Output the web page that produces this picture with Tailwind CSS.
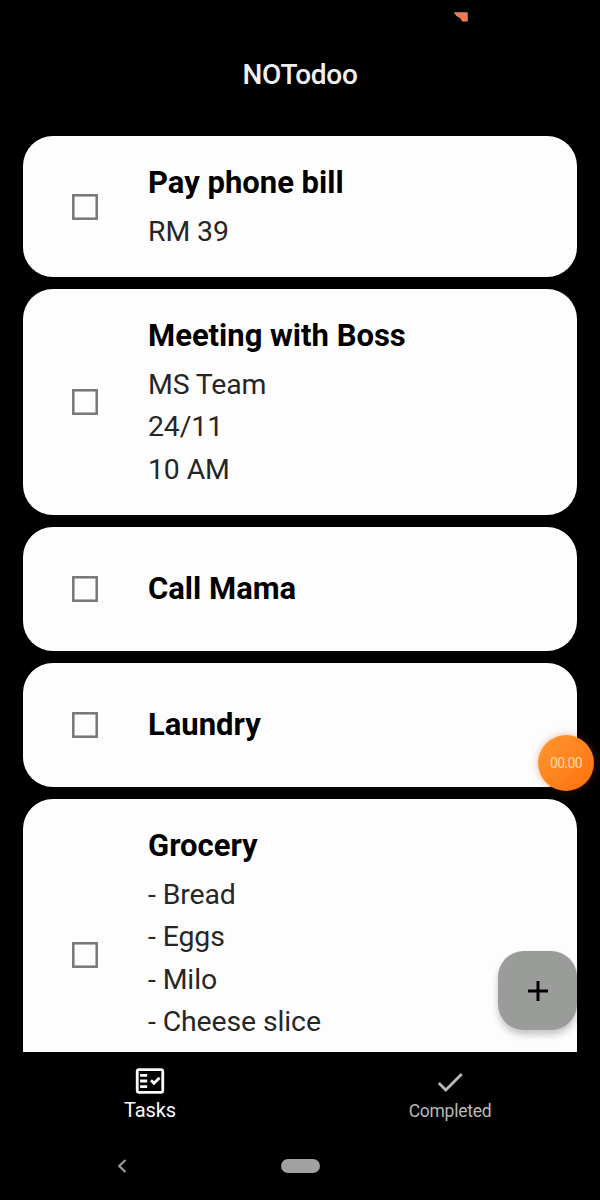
<!DOCTYPE html>
<html lang="en">
<head>
<meta charset="utf-8">
<title>NOTodoo</title>
<script src="https://cdn.jsdelivr.net/npm/@tailwindcss/browser@4"></script>
</head>
<body class="bg-black">
<div class="relative flex h-[1200px] w-[600px] flex-col overflow-hidden bg-black font-['Roboto',sans-serif]">
  <svg class="absolute left-[453px] top-[12px]" width="16" height="12" viewBox="0 0 16 12"><path d="M1 .5H14.500V9.500H9Q8.500 6.500 6 5.500Q2.500 4 1 .5Z" fill="#f4784a"/><path d="M1 .8H14.200V9.500" fill="none" stroke="#a59a94" stroke-width=".8"/></svg>

  <header class="flex h-[136px] shrink-0 items-start justify-center pt-[56px]">
    <h1 class="text-[28px] font-medium leading-[38px] tracking-[-0.3px] text-[#f0f0f0]">NOTodoo</h1>
  </header>

  <main class="flex h-[916px] shrink-0 flex-col gap-[12px] overflow-hidden px-[23px]">
    <section class="flex h-[141px] shrink-0 items-start rounded-[30px] bg-[#fefdfe] pl-[49px]">
      <svg class="size-[26px] self-center" viewBox="0 0 26 26"><rect x="1.300" y="1.300" width="23.400" height="23.400" fill="none" stroke="#767876" stroke-width="2.500"/></svg>
      <div class="ml-[50px] pt-[26px]">
        <h2 class="text-[31px] font-bold leading-[42px] text-black">Pay phone bill</h2>
        <p class="mt-[6.5px] text-[28.4px] leading-[42.5px] tracking-[-0.1px] text-[#262626]">RM 39</p>
      </div>
    </section>
    <section class="flex h-[226px] shrink-0 items-start rounded-[30px] bg-[#fefdfe] pl-[49px]">
      <svg class="size-[26px] self-center" viewBox="0 0 26 26"><rect x="1.300" y="1.300" width="23.400" height="23.400" fill="none" stroke="#767876" stroke-width="2.500"/></svg>
      <div class="ml-[50px] pt-[26px]">
        <h2 class="text-[31px] font-bold leading-[42px] text-black">Meeting with Boss</h2>
        <p class="mt-[6.5px] text-[28.4px] leading-[42.5px] tracking-[-0.1px] text-[#262626]">MS Team<br>24/11<br>10 AM</p>
      </div>
    </section>
    <section class="flex h-[124px] shrink-0 items-center rounded-[30px] bg-[#fefdfe] pl-[49px]">
      <svg class="size-[26px]" viewBox="0 0 26 26"><rect x="1.300" y="1.300" width="23.400" height="23.400" fill="none" stroke="#767876" stroke-width="2.500"/></svg>
      <h2 class="ml-[50px] text-[31px] font-bold leading-[42px] text-black">Call Mama</h2>
    </section>
    <section class="flex h-[124px] shrink-0 items-center rounded-[30px] bg-[#fefdfe] pl-[49px]">
      <svg class="size-[26px]" viewBox="0 0 26 26"><rect x="1.300" y="1.300" width="23.400" height="23.400" fill="none" stroke="#767876" stroke-width="2.500"/></svg>
      <h2 class="ml-[50px] text-[31px] font-bold leading-[42px] text-black">Laundry</h2>
    </section>
    <section class="flex h-[311px] shrink-0 items-start rounded-t-[30px] bg-[#fefdfe] pl-[49px]">
      <svg class="size-[26px] self-center" viewBox="0 0 26 26"><rect x="1.300" y="1.300" width="23.400" height="23.400" fill="none" stroke="#767876" stroke-width="2.500"/></svg>
      <div class="ml-[50px] pt-[26px]">
        <h2 class="text-[31px] font-bold leading-[42px] text-black">Grocery</h2>
        <p class="mt-[6.5px] text-[28.4px] leading-[42.5px] tracking-[-0.1px] text-[#262626]">- Bread<br>- Eggs<br>- Milo<br>- Cheese slice</p>
      </div>
    </section>
  </main>

  <nav class="grid h-[90px] shrink-0 grid-cols-2">
    <div class="flex flex-col items-center pt-[12px] text-[#fafafa]">
      <svg class="h-[34px] w-[34px]" viewBox="0 0 24 24" fill="currentColor"><path fill-rule="evenodd" d="M20 3H4C2.900 3 2 3.900 2 5V19C2 20.100 2.900 21 4 21H20C21.100 21 22 20.100 22 19V5C22 3.900 21.100 3 20 3ZM20 19H4V5H20Z"/><path d="M19.410 10.420L17.990 9L14.820 12.170L13.410 10.750L12 12.160L14.820 15ZM5 7H10V9H5ZM5 11H10V13H5ZM5 15H10V17H5Z"/></svg>
      <span class="text-[20px] leading-[25px] tracking-[-0.1px]">Tasks</span>
    </div>
    <div class="flex flex-col items-center pt-[13px] text-[#b9bab9]">
      <svg class="h-[34px] w-[34px]" viewBox="0 0 24 24" fill="currentColor"><path d="M9 16.170L4.830 12L3.410 13.410L9 19L21 7L19.590 5.590Z"/></svg>
      <span class="text-[17.5px] leading-[25px] tracking-[-0.25px]">Completed</span>
    </div>
  </nav>

  <footer class="flex flex-1 items-start pt-[17px]">
    <svg class="ml-[117px] w-[12px]" height="14" viewBox="0 0 12 14"><path d="M8.500 1L2.200 7L8.500 13" fill="none" stroke="#9a9a9a" stroke-width="2.200"/></svg>
    <span class="ml-[152px] h-[14px] w-[39px] rounded-full bg-[#a0a1a0]"></span>
  </footer>

  <div class="absolute left-[538px] top-[735px] flex size-[56px] items-center justify-center rounded-full bg-gradient-to-br from-[#ff9730] to-[#ff6f05] shadow-[0_0_8px_rgba(190,70,10,0.35)]">
    <span class="text-[14px] leading-none tracking-[-0.6px] text-[#ffd9a8]">00.00</span>
  </div>
  <button class="absolute left-[498px] top-[951px] flex size-[79px] items-center justify-center rounded-[26px] bg-[#9a9c9a] shadow-[0_5px_7px_rgba(0,0,0,0.22)]">
    <svg width="22" height="22" viewBox="0 0 22 22"><path d="M11 1V21M1 11H21" stroke="#000" stroke-width="3"/></svg>
  </button>
</div>
</body>
</html>
